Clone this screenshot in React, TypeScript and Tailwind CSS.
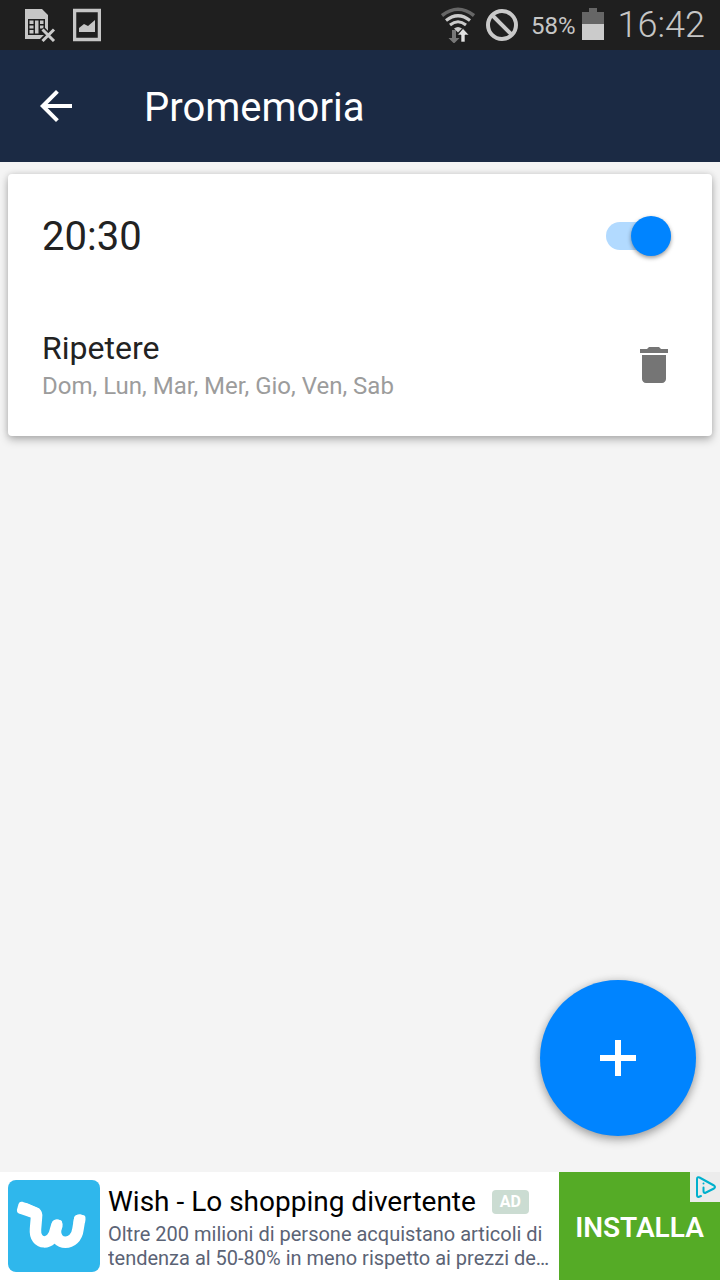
import { useState } from "react";

function SimIcon() {
  return (
    <svg width="32" height="34" viewBox="0 0 32 34" aria-hidden="true">
      <path d="M1 1H18L24 7V24L20 22V31H1Z" fill="#c6c6c6" />
      <rect x="4" y="11" width="17" height="16" fill="#1f1f1f" />
      <path d="M5.500 12.500H9.500V16H5.500zM5.500 17.500H9.500V20.500H5.500zM5.500 22H9.500V25.500H5.500zM11 12.500h3.500v13H11zM16 12.500h3.500V16H16zM16 17.500h3.500v3H16z" fill="#c6c6c6" />
      <path d="M18 21L30 33M30 21L18 33" stroke="#1f1f1f" strokeWidth="6" />
      <path d="M18.500 21.500L30 33M30 21.500L18.500 33" stroke="#cbcbcb" strokeWidth="3" />
    </svg>
  );
}

function ImageIcon() {
  return (
    <svg width="28" height="34" viewBox="0 0 28 34" aria-hidden="true">
      <rect x="1.500" y="2.500" width="25" height="29" fill="none" stroke="#c6c6c6" strokeWidth="3.500" />
      <path d="M6 24v-4l5-4 4 2 7-6v12z" fill="#c6c6c6" />
    </svg>
  );
}

function WifiIcon() {
  return (
    <svg width="34" height="36" viewBox="0 0 34 36" aria-hidden="true">
      <path d="M1 8.500Q17-4 33 8.500" fill="none" stroke="#666" strokeWidth="3.600" />
      <path d="M5 13.500Q17 4 29 13.500" fill="none" stroke="#cbcbcb" strokeWidth="3.200" />
      <path d="M9 18Q17 11.500 25 18" fill="none" stroke="#cbcbcb" strokeWidth="3" />
      <path d="M13 21.500L17 25.500L21 21.500Q17 18.500 13 21.500Z" fill="#cbcbcb" />
      <path d="M11 23h4v8h3.500l-5.500 5.500-5.500-5.500h3.500z" fill="#777" />
      <path d="M20 35h4v-7h4l-6-6.500-5.500 6.500h3.500z" fill="#e2e2e2" stroke="#1f1f1f" strokeWidth="0.600" />
    </svg>
  );
}

function WishLogo() {
  return (
    <svg viewBox="0 0 92 92" className="size-23 shrink-0 rounded-lg bg-[#2fb7ec]" aria-hidden="true">
      <path
        d="M17 28.500L27.500 33Q29 34 28.500 37L27.500 49C26 66 45 66 47.500 50L49 45M47.500 50C46 66 68 67 70 49L71.500 40"
        fill="none"
        stroke="white"
        strokeWidth="11.500"
        strokeLinecap="round"
        strokeLinejoin="round"
      />
      <path d="M14.500 21.800Q11.500 21 10.500 24L9 29.500Q8.500 32.500 11 33.500L24 38L32 29Z" fill="white" />
      <path d="M43.500 46L44 43Q44.500 40 48 40H51Q54.500 40 54 43L53 50ZM65.500 43L66 38Q66.500 35 69.500 35H74.500Q77.500 35 77.500 38L77 43Z" fill="white" />
    </svg>
  );
}

function StatusBar() {
  return (
    <div className="flex h-[50px] items-center bg-[#1f1f1f] pr-[15px] pl-6 text-[#c6c6c6]">
      <SimIcon />
      <span className="ml-[17px] flex"><ImageIcon /></span>
      <div className="ml-auto flex items-center">
        <WifiIcon />
        <svg width="34" height="34" viewBox="0 0 34 34" className="ml-[10px]" aria-hidden="true">
          <circle cx="17" cy="17" r="14" fill="none" stroke="#c9c9c9" strokeWidth="4" />
          <path d="M7 7L27 27" stroke="#c9c9c9" strokeWidth="4" />
        </svg>
        <span className="ml-3 pt-0.5 text-2xl leading-8">58%</span>
        <svg width="22" height="34" viewBox="0 0 22 34" className="ml-1.5" aria-hidden="true">
          <path d="M7 0h8v4h7v12H0V4h7z" fill="#666" />
          <path d="M0 16h22v16H0z" fill="#cbcbcb" />
        </svg>
        <span className="ml-3.5 text-4xl font-light">16:42</span>
      </div>
    </div>
  );
}

function AdBanner() {
  return (
    <aside className="flex h-[108px] bg-white">
      <div className="flex min-w-0 flex-1 items-center gap-2 pl-2">
        <WishLogo />
        <div className="min-w-0 flex-1">
          <div className="flex items-center gap-4">
            <h2 className="truncate text-[28px] leading-10 text-black">Wish - Lo shopping divertente</h2>
            <span className="rounded-sm bg-[#cbdcd2] px-2 text-base leading-6 font-bold text-white">AD</span>
          </div>
          <p className="line-clamp-2 text-xl leading-6 text-[#5b6375]">
            Oltre 200 milioni di persone acquistano articoli di
            <br />
            tendenza al 50-80% in meno rispetto ai prezzi de…
          </p>
        </div>
      </div>
      <div className="relative flex w-[161px] shrink-0 bg-[#55ab26]">
        <button type="button" className="flex-1 pt-1 text-[28px] font-semibold text-white">INSTALLA</button>
        <a href="#adchoices" aria-label="AdChoices" className="absolute top-0 right-0 flex size-[30px] items-center justify-center bg-[#ececec]">
          <svg width="30" height="30" viewBox="0 0 30 30" fill="none" stroke="#00b0cd" strokeWidth="2" strokeLinecap="round" strokeLinejoin="round" aria-hidden="true">
            <path d="M11 24L8.500 25Q7 25 7 23V7Q7 4.500 9.500 5.500L24 13.500Q26 15 24 16.500L15 21Q13.500 21 13.500 19V15.500" />
            <path d="M13.500 11.500v.1" />
          </svg>
        </a>
      </div>
    </aside>
  );
}

export default function App() {
  const [enabled, setEnabled] = useState(true);
  return (
    <div className="flex min-h-screen flex-col bg-[#f4f4f4] font-['Roboto',sans-serif]">
      <StatusBar />
      <header className="flex h-28 items-center bg-[#1b2a44] px-8 text-white">
        <button type="button" aria-label="Indietro" className="flex size-12 items-center justify-center">
          <svg width="48" height="48" viewBox="0 0 24 24" fill="currentColor" aria-hidden="true">
            <path d="M20 11H7.830l5.590-5.590L12 4l-8 8 8 8 1.410-1.410L7.830 13H20v-2z" />
          </svg>
        </button>
        <h1 className="ml-16 pt-1 text-[40px] leading-12">Promemoria</h1>
      </header>

      <main className="flex flex-1 flex-col px-2 pt-3 pb-9">
        <section className="rounded-sm bg-white pt-8 pr-[41px] pb-8 pl-[34px] text-[#222] shadow-[0_4px_8px_rgba(0,0,0,0.25),0_0_6px_rgba(0,0,0,0.12)]">
          <div className="flex items-center justify-between">
            <time className="pt-0.5 text-[40px] leading-[58px]">20:30</time>
            <label className="flex cursor-pointer">
              <input
                type="checkbox"
                role="switch"
                aria-label="Promemoria 20:30"
                checked={enabled}
                onChange={(e) => setEnabled(e.target.checked)}
                className="peer sr-only"
              />
              <span className="flex h-7 w-[65px] items-center rounded-full bg-[#ccc] peer-checked:justify-end peer-checked:bg-[#b2daff] peer-checked:*:bg-[#0084ff]">
                <span className="size-10 rounded-full bg-[#f4f4f4] shadow-[0_2px_4px_rgba(0,0,0,0.4)]" />
              </span>
            </label>
          </div>
          <div className="mt-15 flex items-center justify-between">
            <div className="pt-0.5">
              <h2 className="text-[32px] leading-10">Ripetere</h2>
              <p className="text-2xl leading-9 text-[#9c9c9c]">Dom, Lun, Mar, Mer, Gio, Ven, Sab</p>
            </div>
            <button type="button" aria-label="Elimina" className="-mr-[7px] flex">
              <svg width="48" height="48" viewBox="0 0 24 24" fill="#757575" aria-hidden="true">
                <path d="M6 19c0 1.100.9 2 2 2h8c1.100 0 2-.9 2-2V7H6v12zM19 4h-3.500l-1-1h-5l-1 1H5v2h14V4z" />
              </svg>
            </button>
          </div>
        </section>

        <button
          type="button"
          aria-label="Aggiungi promemoria"
          className="mt-auto mr-4 flex size-39 items-center justify-center self-end rounded-full bg-[#0084ff] shadow-[0_4px_10px_rgba(0,0,0,0.3),0_0_8px_rgba(0,0,0,0.12)]"
        >
          <svg width="36" height="36" viewBox="0 0 36 36" aria-hidden="true">
            <path d="M18 0v36M0 18h36" stroke="white" strokeWidth="6" />
          </svg>
        </button>
      </main>
      <AdBanner />
    </div>
  );
}
